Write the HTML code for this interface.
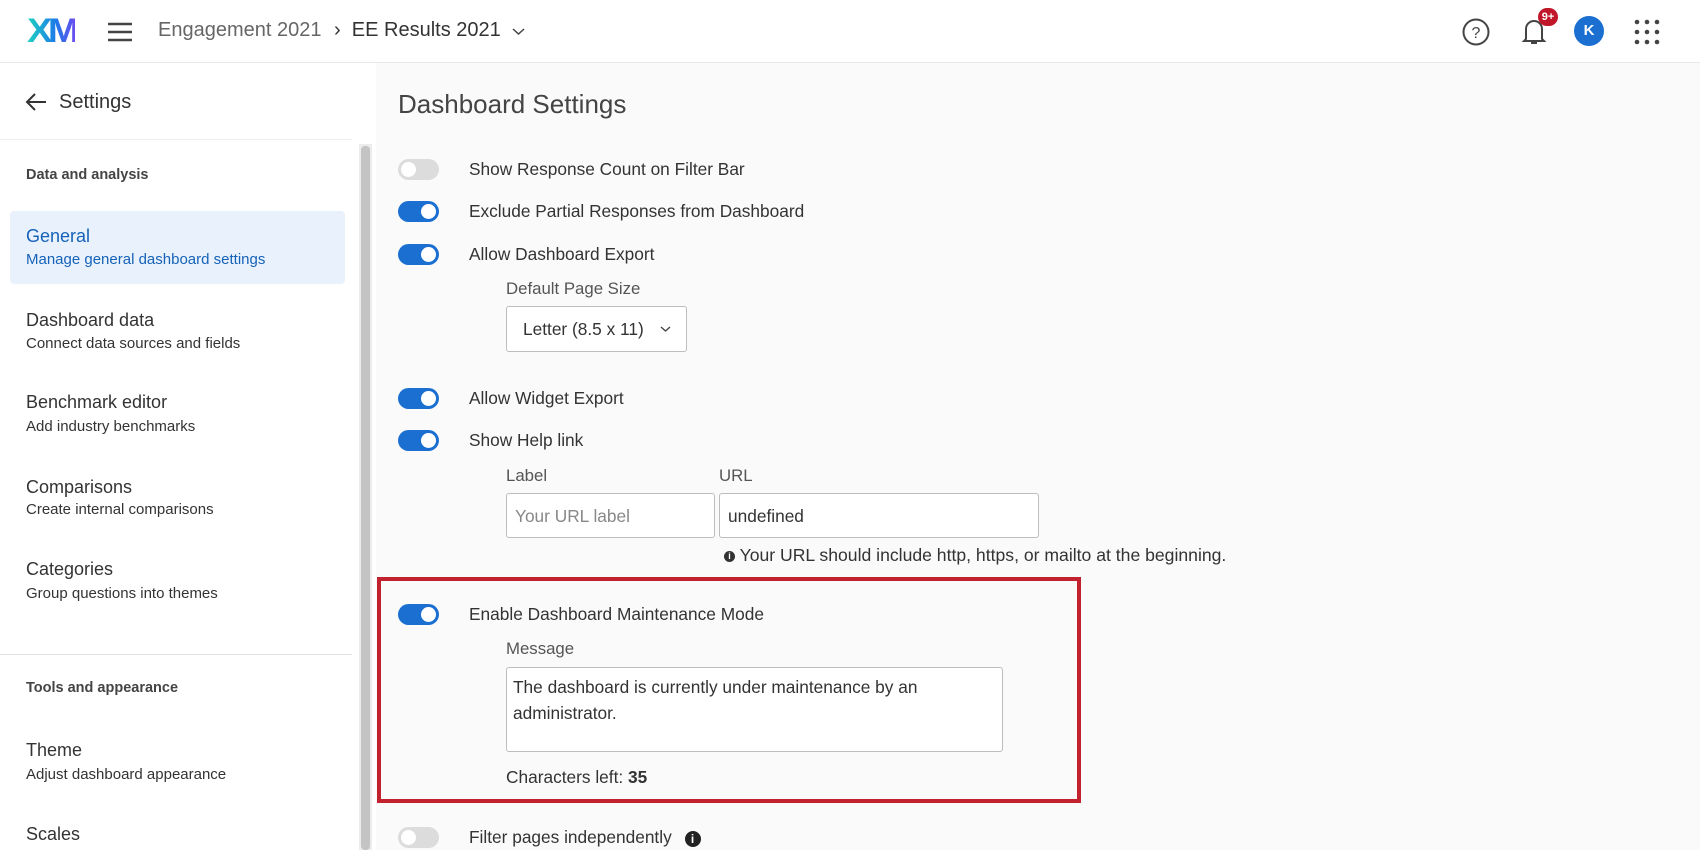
<!DOCTYPE html>
<html><head><meta charset="utf-8"><style>
*{box-sizing:border-box;margin:0;padding:0}
body{width:1700px;height:850px;overflow:hidden;background:#fafafa;font-family:"Liberation Sans",sans-serif;color:#333;position:relative}
.a{position:absolute;white-space:nowrap}
.hdr{position:absolute;left:0;top:0;width:1700px;height:63px;background:#fff;border-bottom:1px solid #e8e8e8}
.side{position:absolute;left:0;top:63px;width:376px;height:787px;background:#fff}
.tg{position:absolute;left:398px;width:41px;height:21px;border-radius:11px;background:#1a6fd1}
.tg::after{content:"";position:absolute;right:3px;top:3px;width:15px;height:15px;border-radius:50%;background:#fff}
.tg.off{background:#dcdcdc}
.tg.off::after{left:3px;right:auto}
.lb{font-size:17.3px;color:#333}
.sm{font-size:16.8px;color:#555}
.box{position:absolute;background:#fff;border:1px solid #bdbdbd;border-radius:3px}
.st{font-size:18px;color:#333}
.ss{font-size:15px;color:#333}
</style></head><body>
<div class="hdr"></div>
<div class="a" style="left:27px;top:12px;font-size:34px;font-weight:bold;letter-spacing:-4px;transform:scaleX(1.12);transform-origin:left;color:#1aa9e0;background:linear-gradient(90deg,#20d3c0,#1c7ae8 60%,#6b4df0);-webkit-background-clip:text;background-clip:text;-webkit-text-fill-color:transparent">XM</div>
<svg class="a" style="left:107px;top:22px" width="26" height="20"><path d="M1 2h24M1 10h24M1 18h24" stroke="#444" stroke-width="2.4"/></svg>
<div class="a" style="left:158px;top:19px;font-size:20px;color:#666">Engagement 2021</div>
<div class="a" style="left:334px;top:19px;font-size:20px;color:#333">›&nbsp;&nbsp;EE Results 2021</div>
<svg class="a" style="left:512px;top:27px" width="13" height="9"><path d="M1 2l5.5 5 5.5-5" stroke="#444" fill="none" stroke-width="1.5"/></svg>
<svg class="a" style="left:1461px;top:17px" width="30" height="30"><circle cx="15" cy="15" r="12.5" stroke="#444" stroke-width="2" fill="none"/><text x="15" y="21" text-anchor="middle" font-size="16" font-family="Liberation Sans" fill="#444">?</text></svg>
<svg class="a" style="left:1519px;top:14px" width="30" height="34"><path d="M7 25V15a8 8 0 0116 0v10l2 2H5z" stroke="#444" stroke-width="2" fill="none"/><path d="M12 29h6" stroke="#444" stroke-width="2"/></svg>
<div class="a" style="left:1538px;top:8px;width:20px;height:18px;border-radius:9px;background:#c0182a;color:#fff;font-size:11px;font-weight:bold;text-align:center;line-height:18px">9+</div>
<div class="a" style="left:1574px;top:16px;width:30px;height:30px;border-radius:50%;background:#1a6fd1;color:#fff;font-size:15px;font-weight:bold;text-align:center;line-height:30px">K</div>
<svg class="a" style="left:1634px;top:19px" width="26" height="26"><g fill="#444"><circle cx="3" cy="3" r="2.3"/><circle cx="13" cy="3" r="2.3"/><circle cx="23" cy="3" r="2.3"/><circle cx="3" cy="13" r="2.3"/><circle cx="13" cy="13" r="2.3"/><circle cx="23" cy="13" r="2.3"/><circle cx="3" cy="23" r="2.3"/><circle cx="13" cy="23" r="2.3"/><circle cx="23" cy="23" r="2.3"/></g></svg>

<div class="side"></div>
<div class="a" style="left:0;top:139px;width:352px;height:1px;background:#eee"></div>
<svg class="a" style="left:24px;top:92px" width="24" height="20"><path d="M22 10H3M11 2L3 10l8 8" stroke="#333" stroke-width="2" fill="none"/></svg>
<div class="a" style="left:59px;top:91px;font-size:20px;color:#333">Settings</div>
<div class="a" style="left:359px;top:144px;width:13px;height:706px;background:#ececec"></div>
<div class="a" style="left:361px;top:146px;width:9px;height:704px;background:#c4c4c4;border-radius:4px"></div>
<div class="a" style="left:26px;top:167px;font-size:14.5px;font-weight:bold;color:#444">Data and analysis</div>
<div class="a" style="left:10px;top:211px;width:335px;height:73px;background:#e9f2fc;border-radius:4px"></div>
<div class="a st" style="left:26px;top:226px;color:#1562b8">General</div>
<div class="a ss" style="left:26px;top:251px;color:#1562b8">Manage general dashboard settings</div>
<div class="a st" style="left:26px;top:310px">Dashboard data</div><div class="a ss" style="left:26px;top:335px">Connect data sources and fields</div>
<div class="a st" style="left:26px;top:392px">Benchmark editor</div><div class="a ss" style="left:26px;top:418px">Add industry benchmarks</div>
<div class="a st" style="left:26px;top:477px">Comparisons</div><div class="a ss" style="left:26px;top:501px">Create internal comparisons</div>
<div class="a st" style="left:26px;top:559px">Categories</div><div class="a ss" style="left:26px;top:585px">Group questions into themes</div>
<div class="a" style="left:0;top:654px;width:352px;height:1px;background:#e3e3e3"></div>
<div class="a" style="left:26px;top:680px;font-size:14.5px;font-weight:bold;color:#444">Tools and appearance</div>
<div class="a st" style="left:26px;top:740px">Theme</div><div class="a ss" style="left:26px;top:766px">Adjust dashboard appearance</div>
<div class="a st" style="left:26px;top:824px">Scales</div>

<div class="a" style="left:398px;top:89px;font-size:26px;color:#444">Dashboard Settings</div>
<div class="tg off" style="top:159px"></div><div class="a lb" style="left:469px;top:159px">Show Response Count on Filter Bar</div>
<div class="tg" style="top:201px"></div><div class="a lb" style="left:469px;top:201px">Exclude Partial Responses from Dashboard</div>
<div class="tg" style="top:244px"></div><div class="a lb" style="left:469px;top:244px">Allow Dashboard Export</div>
<div class="a sm" style="left:506px;top:279px">Default Page Size</div>
<div class="box" style="left:506px;top:306px;width:181px;height:46px"></div>
<div class="a lb" style="left:523px;top:319px">Letter (8.5 x 11)</div>
<svg class="a" style="left:660px;top:325px" width="11" height="8"><path d="M1 2l4.5 4 4.5-4" stroke="#444" fill="none" stroke-width="1.4"/></svg>
<div class="tg" style="top:388px"></div><div class="a lb" style="left:469px;top:388px">Allow Widget Export</div>
<div class="tg" style="top:430px"></div><div class="a lb" style="left:469px;top:430px">Show Help link</div>
<div class="a sm" style="left:506px;top:466px">Label</div><div class="a sm" style="left:719px;top:466px">URL</div>
<div class="box" style="left:506px;top:493px;width:209px;height:45px"></div>
<div class="a" style="left:515px;top:506px;font-size:17.3px;color:#888">Your URL label</div>
<div class="box" style="left:719px;top:493px;width:320px;height:45px"></div>
<div class="a lb" style="left:728px;top:506px">undefined</div>
<div class="a" style="left:724px;top:545px;font-size:17.6px;color:#333"><span style="display:inline-block;width:11px;height:11px;border-radius:50%;background:#333;color:#fff;font-size:9px;font-weight:bold;text-align:center;line-height:11px;vertical-align:2px">i</span> Your URL should include http, https, or mailto at the beginning.</div>

<div class="a" style="left:377px;top:577px;width:704px;height:226px;border:4px solid #c1222e"></div>
<div class="tg" style="top:604px"></div><div class="a lb" style="left:469px;top:604px">Enable Dashboard Maintenance Mode</div>
<div class="a sm" style="left:506px;top:639px">Message</div>
<div class="box" style="left:506px;top:667px;width:497px;height:85px"></div>
<div class="a lb" style="left:513px;top:674px;line-height:26px;white-space:normal;width:480px">The dashboard is currently under maintenance by an administrator.</div>
<div class="a lb" style="left:506px;top:767px">Characters left: <b>35</b></div>
<div class="tg off" style="top:827px"></div><div class="a lb" style="left:469px;top:827px">Filter pages independently <span style="display:inline-block;width:16px;height:16px;border-radius:50%;background:#222;color:#fff;font-size:12px;font-weight:bold;text-align:center;line-height:16px;margin-left:8px">i</span></div>
</body></html>
